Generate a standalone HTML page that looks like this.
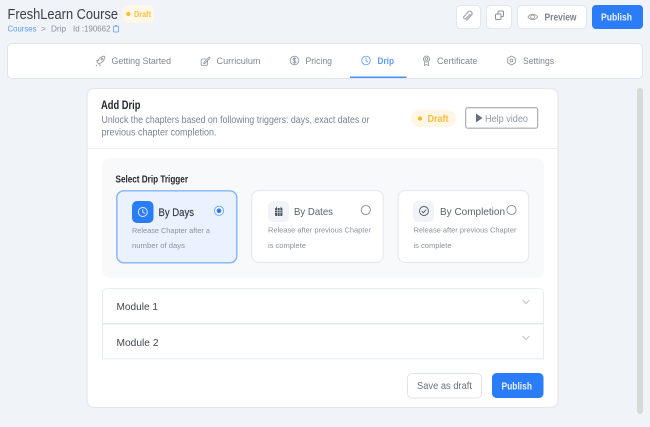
<!DOCTYPE html>
<html><head><meta charset="utf-8"><style>
html,body{margin:0;padding:0;width:650px;height:427px;overflow:hidden;background:#f0f3f8}
svg{display:block;position:absolute;left:0;top:0;filter:blur(.28px)}
text{font-family:"Liberation Sans",sans-serif;dominant-baseline:auto}
.ic{fill:none;stroke:#8f959d;stroke-width:.85;stroke-linecap:round;stroke-linejoin:round}
</style></head><body>
<svg width="650" height="427" viewBox="0 0 650 427" xmlns="http://www.w3.org/2000/svg">
<rect width="650" height="427" fill="#f0f3f8"/>

<!-- header -->
<text x="7.500" y="19" font-size="14.500" fill="#3b4049" textLength="110.500" lengthAdjust="spacingAndGlyphs">FreshLearn Course</text>
<rect x="123" y="5" width="31" height="18" rx="5" fill="#fff8e9"/>
<circle cx="128.300" cy="14" r="2.100" fill="#ffb92e"/>
<text x="134" y="17" font-size="8" font-weight="700" fill="#ffbe45" textLength="17" lengthAdjust="spacingAndGlyphs">Draft</text>
<text x="7.500" y="31.300" font-size="8" fill="#5a9df5" textLength="29" lengthAdjust="spacingAndGlyphs">Courses</text>
<text x="41" y="31.300" font-size="8" fill="#8b9098" textLength="5" lengthAdjust="spacingAndGlyphs">&gt;</text>
<text x="51" y="31.300" font-size="8" fill="#8b9098" textLength="15" lengthAdjust="spacingAndGlyphs">Drip</text>
<text x="73" y="31.300" font-size="8" fill="#8b9098" textLength="37.500" lengthAdjust="spacingAndGlyphs">Id :190662</text>
<rect x="113.500" y="26" width="5" height="6" rx="1" fill="none" stroke="#5a9df5" stroke-width=".8"/>
<rect x="115" y="25.200" width="2" height="1.400" fill="#5a9df5"/>

<!-- top buttons -->
<rect x="456.500" y="5.500" width="24" height="23" rx="4" fill="#fff" stroke="#e3e7ee"/>
<path d="M470.500 13.500l-4.200 4.200a1.500 1.500 0 0 1-2-2l5-5.200a2.300 2.300 0 0 1 3 3.200l-5 5.300" fill="none" stroke="#a8adb4" stroke-width="1.300" stroke-linecap="round" transform="translate(-.5 1)"/>
<rect x="486.500" y="5.500" width="25" height="23" rx="4" fill="#fff" stroke="#e3e7ee"/>
<rect x="495.500" y="14" width="5.500" height="5.500" rx="1" fill="none" stroke="#8a9099"/>
<path d="M498 14v-2a1 1 0 0 1 1-1h3.500a1 1 0 0 1 1 1v3.500a1 1 0 0 1-1 1H501" fill="none" stroke="#8a9099"/>
<rect x="517.500" y="5.500" width="69" height="23" rx="4" fill="#fff" stroke="#e3e7ee"/>
<path d="M528 17c2.200-3.600 7.300-3.600 9.500 0c-2.200 3.600-7.300 3.600-9.500 0z" fill="none" stroke="#999ea5" stroke-width=".9"/>
<circle cx="532.700" cy="17" r="2" fill="none" stroke="#999ea5" stroke-width=".9"/>
<text x="544.500" y="20.500" font-size="10" font-weight="700" fill="#7d838c" textLength="32" lengthAdjust="spacingAndGlyphs">Preview</text>
<rect x="592" y="5" width="51" height="24" rx="4" fill="#2b7df7"/>
<text x="601" y="20.500" font-size="10" font-weight="700" fill="#eaf2ff" textLength="31" lengthAdjust="spacingAndGlyphs">Publish</text>

<!-- nav -->
<rect x="7.500" y="43.500" width="635" height="35" rx="4.500" fill="#fff" stroke="#dfe3ea"/>
<g class="ic">
<path d="M97 62l3-4.500 4-1.500 1 1-1.500 4-4.500 3z"/><circle cx="102" cy="59" r=".8"/><path d="M96.500 60.500h2M100 64.500v1.500M97 65l-.8.800"/>
<path d="M207.500 60.500v3.800a1 1 0 0 1-1 1h-4.300a1 1 0 0 1-1-1V60a1 1 0 0 1 1-1h3.500"/><path d="M204 62.500l5-5.500 1 1-5 5.300-1.300.3z"/>
<circle cx="294.500" cy="60.500" r="4.300"/><path d="M296 58.700c-.8-.7-3-.7-3 .8s3 .8 3 2.300-2.200 1.500-3 .7M294.500 57.500v6"/>
<path d="M426.500 56a3 3 0 1 1-.01 0M424.500 62.500v3l2-1 2 1v-3"/><circle cx="426.500" cy="59" r="1.300"/>
<path d="M511.500 56l3.800 2.200v4.500l-3.800 2.300-3.800-2.300v-4.500z"/><circle cx="511.500" cy="60.500" r="1.500"/>
</g>
<text x="111.500" y="63.800" font-size="9.500" fill="#80868f" textLength="59.500" lengthAdjust="spacingAndGlyphs">Getting Started</text>
<text x="216.500" y="63.800" font-size="9.500" fill="#80868f" textLength="44" lengthAdjust="spacingAndGlyphs">Curriculum</text>
<text x="305.500" y="63.800" font-size="9.500" fill="#80868f" textLength="26.500" lengthAdjust="spacingAndGlyphs">Pricing</text>
<circle cx="366" cy="60.500" r="4.300" fill="none" stroke="#6ea3f5" stroke-width=".9"/>
<path d="M366 57.800v3l1.800 1" fill="none" stroke="#6ea3f5" stroke-width=".9" stroke-linecap="round"/>
<text x="377.500" y="63.800" font-size="9.500" font-weight="700" fill="#5f9af4" textLength="16.500" lengthAdjust="spacingAndGlyphs">Drip</text>
<rect x="350" y="76.500" width="56.500" height="1.500" fill="#4f8ff5"/>
<text x="437" y="63.800" font-size="9.500" fill="#80868f" textLength="40.500" lengthAdjust="spacingAndGlyphs">Certificate</text>
<text x="523" y="63.800" font-size="9.500" fill="#80868f" textLength="31" lengthAdjust="spacingAndGlyphs">Settings</text>

<!-- scrollbar -->
<rect x="637" y="88" width="6" height="326" rx="3" fill="#d9d9d9"/>

<!-- main card -->
<rect x="87" y="88.500" width="471" height="319" rx="7" fill="#fff" stroke="#e5e7ec" stroke-width="1.200"/>
<rect x="87.500" y="148" width="470" height="1" fill="#eef0f3"/>
<text x="101" y="109" font-size="11.500" font-weight="700" fill="#25282e" textLength="39.500" lengthAdjust="spacingAndGlyphs">Add Drip</text>
<text x="101.500" y="123" font-size="10" fill="#7b8594" textLength="268" lengthAdjust="spacingAndGlyphs">Unlock the chapters based on following triggers: days, exact dates or</text>
<text x="101.500" y="135.500" font-size="10" fill="#7b8594" textLength="115" lengthAdjust="spacingAndGlyphs">previous chapter completion.</text>
<rect x="411" y="110" width="45" height="17" rx="8.500" fill="#fff6e5"/>
<circle cx="420" cy="118.500" r="2.200" fill="#ffb92e"/>
<text x="427.500" y="122" font-size="10" font-weight="700" fill="#ffbd42" textLength="21" lengthAdjust="spacingAndGlyphs">Draft</text>
<rect x="465.700" y="107.700" width="72" height="20.500" rx="2" fill="#fff" stroke="#a5a7ab" stroke-width="1.100"/>
<path d="M476 113.500l6.500 4.500-6.500 4.500z" fill="#666e7a"/>
<text x="485" y="122" font-size="10" fill="#8f98a5" textLength="43" lengthAdjust="spacingAndGlyphs">Help video</text>

<!-- panel -->
<rect x="102" y="158" width="442" height="120" rx="7" fill="#f8f9fb"/>
<text x="115.500" y="182.300" font-size="10" font-weight="700" fill="#25282e" textLength="72.500" lengthAdjust="spacingAndGlyphs">Select Drip Trigger</text>

<rect x="116.800" y="190.800" width="120" height="72" rx="7" fill="#e9f2fe" stroke="#82b4f8" stroke-width="1.400"/>
<rect x="132" y="201" width="21.500" height="22" rx="5" fill="#2b7df7"/>
<circle cx="142.800" cy="212" r="4.500" fill="none" stroke="#dfeaff" stroke-width="1"/>
<path d="M142.800 209.300v2.900l1.800 1" fill="none" stroke="#dfeaff" stroke-width=".9" stroke-linecap="round"/>
<text x="158.500" y="216" font-size="11" fill="#33373e" stroke="#33373e" stroke-width=".15" textLength="35.500" lengthAdjust="spacingAndGlyphs">By Days</text>
<circle cx="219" cy="210.800" r="4.600" fill="#fff" stroke="#6ea7f7" stroke-width="1"/>
<circle cx="219" cy="210.800" r="2.400" fill="#2b7df7"/>
<text x="132" y="233" font-size="7.500" fill="#8a929d" textLength="78" lengthAdjust="spacingAndGlyphs">Release Chapter after a</text>
<text x="132" y="248" font-size="7.500" fill="#8a929d" textLength="53" lengthAdjust="spacingAndGlyphs">number of days</text>

<rect x="251.700" y="190.500" width="131.500" height="72" rx="7" fill="#fff" stroke="#e6e9ef" stroke-width="1.200"/>
<rect x="268" y="201" width="21" height="21" rx="5" fill="#f0f3f8"/>
<rect x="275" y="208" width="7.500" height="8" rx="1" fill="#4f555e"/>
<path d="M275 210.500h7.500M275 212.500h7.500M277.500 208v8M280 208v8" stroke="#f0f3f8" stroke-width=".6"/>
<path d="M276.500 206.800v1.500M281 206.800v1.500" stroke="#4f555e" stroke-width=".8"/>
<text x="294" y="215" font-size="10.500" fill="#5d636c" textLength="39" lengthAdjust="spacingAndGlyphs">By Dates</text>
<circle cx="365.800" cy="210" r="4.600" fill="#fff" stroke="#8a8f96" stroke-width=".9"/>
<text x="268" y="232.500" font-size="7.500" fill="#8a929d" textLength="103" lengthAdjust="spacingAndGlyphs">Release after previous Chapter</text>
<text x="268" y="248" font-size="7.500" fill="#8a929d" textLength="38" lengthAdjust="spacingAndGlyphs">is complete</text>

<rect x="398.200" y="190.500" width="130.500" height="72" rx="7" fill="#fff" stroke="#e6e9ef" stroke-width="1.200"/>
<rect x="413" y="201" width="21" height="21" rx="5" fill="#f0f3f8"/>
<circle cx="424" cy="211" r="4.500" fill="none" stroke="#4f555e" stroke-width=".9"/>
<path d="M421.800 211.200l1.600 1.500 2.800-3" fill="none" stroke="#4f555e" stroke-width=".9"/>
<text x="440" y="215" font-size="10.500" fill="#5d636c" textLength="65" lengthAdjust="spacingAndGlyphs">By Completion</text>
<circle cx="511.500" cy="210" r="4.600" fill="#fff" stroke="#8a8f96" stroke-width=".9"/>
<text x="413.500" y="232.500" font-size="7.500" fill="#8a929d" textLength="103" lengthAdjust="spacingAndGlyphs">Release after previous Chapter</text>
<text x="413.500" y="248" font-size="7.500" fill="#8a929d" textLength="38" lengthAdjust="spacingAndGlyphs">is complete</text>

<!-- modules -->
<path d="M102.500 359V293a4.500 4.500 0 0 1 4.500-4.500h432a4.500 4.500 0 0 1 4.500 4.500v66" fill="#fff" stroke="#e8edf5"/>
<rect x="102" y="323" width="441.500" height="1.500" fill="#e4e9f2"/>
<rect x="102" y="358.300" width="441.500" height="1" fill="#e4e9f2"/>
<text x="116.500" y="310" font-size="10" fill="#41454c" textLength="41.500" lengthAdjust="spacingAndGlyphs">Module 1</text>
<text x="116.500" y="346" font-size="10" fill="#41454c" textLength="42" lengthAdjust="spacingAndGlyphs">Module 2</text>
<path d="M522.500 300l3.500 3.500 3.500-3.500M522.500 336l3.500 3.500 3.500-3.500" fill="none" stroke="#bfc3c9" stroke-width="1"/>

<!-- footer buttons -->
<rect x="407.500" y="373.500" width="74" height="24.500" rx="4.500" fill="#fff" stroke="#dfe3ea"/>
<text x="417" y="389" font-size="10" fill="#6d737c" textLength="55" lengthAdjust="spacingAndGlyphs">Save as draft</text>
<rect x="492" y="373" width="51.500" height="25" rx="4.500" fill="#2b7df7"/>
<text x="501.500" y="389.300" font-size="10" font-weight="700" fill="#eaf2ff" textLength="30.500" lengthAdjust="spacingAndGlyphs">Publish</text>
</svg>
</body></html>
